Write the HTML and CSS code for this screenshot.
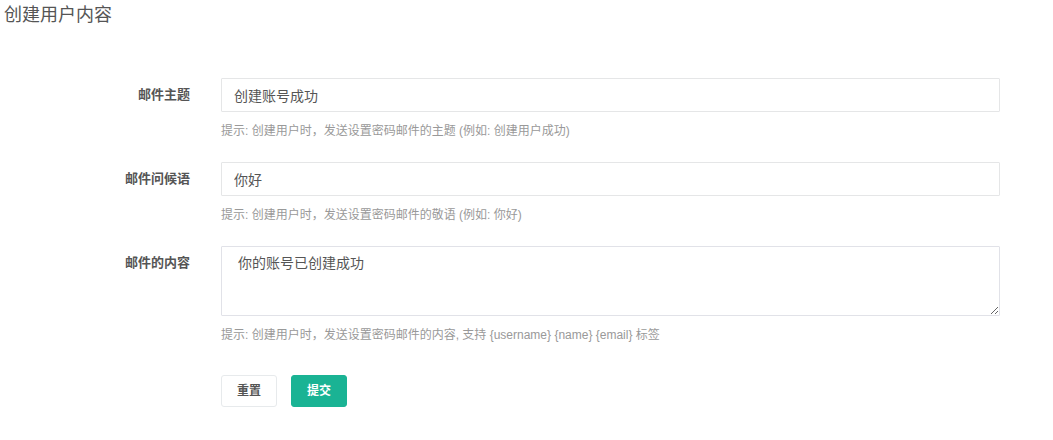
FILE: index.html
```html
<!DOCTYPE html>
<html lang="zh-CN">
<head>
    <meta charset="UTF-8">
    <title>创建用户内容</title>
    <link rel="stylesheet" href="styles.css">
</head>
<body>
    <h3 class="page-title">创建用户内容</h3>
    <form class="mail-form">
        <div class="form-group">
            <label class="control-label">邮件主题</label>
            <div class="field">
                <input type="text" class="form-control" value="创建账号成功">
                <span class="help-block">提示: 创建用户时，发送设置密码邮件的主题 (例如: 创建用户成功)</span>
            </div>
        </div>
        <div class="form-group">
            <label class="control-label">邮件问候语</label>
            <div class="field">
                <input type="text" class="form-control" value="你好">
                <span class="help-block">提示: 创建用户时，发送设置密码邮件的敬语 (例如: 你好)</span>
            </div>
        </div>
        <div class="form-group">
            <label class="control-label">邮件的内容</label>
            <div class="field">
                <textarea class="form-control text-area">你的账号已创建成功</textarea>
                <span class="help-block">提示: 创建用户时，发送设置密码邮件的内容, 支持 {username} {name} {email} 标签</span>
            </div>
        </div>
        <div class="form-group actions">
            <div></div>
            <div class="field btns">
                <button type="reset" class="btn btn-white">重置</button>
                <button type="button" class="btn btn-primary">提交</button>
            </div>
        </div>
    </form>
</body>
</html>
```

FILE: styles.css
```css
body { margin: 0; background: #fff; font-family: "Liberation Sans", "Noto Sans CJK SC", sans-serif; color: #676a6c; font-size: 13px; }
.page-title { margin: 0; padding: 3px 0 0 4px; font-size: 18px; line-height: 24px; font-weight: normal; color: #555; }
.mail-form { padding: 51px 53px 0 0; }
.form-group { display: grid; grid-template-columns: 190px 1fr; column-gap: 31px; margin-bottom: 22px; }
.control-label { text-align: right; font-weight: bold; font-size: 13px; line-height: 20px; padding-top: 7px; color: #555; }
.form-control { display: block; width: 100%; box-sizing: border-box; height: 34px; padding: 6px 12px; border: 1px solid #e5e6e7; border-radius: 1px; font-family: inherit; font-size: 14px; line-height: 20px; color: #555; background: #fff; }
.text-area { height: 70px; padding: 6px 16px 6px 16px; border-color: #e1e2e8; resize: vertical; }
.help-block { display: block; margin-top: 10px; font-size: 12px; line-height: 18px; color: #999; }
.actions { margin-top: 31px; }
.btns { display: flex; gap: 14px; }
.btn { font-family: inherit; font-size: 12px; font-weight: bold; line-height: 18px; padding: 6px 15px; border-radius: 3px; cursor: pointer; }
.btn-white { background: #fff; border: 1px solid #e7eaec; color: #555; }
.btn-primary { background: #1ab394; border: 1px solid #1ab394; color: #fff; }
```
